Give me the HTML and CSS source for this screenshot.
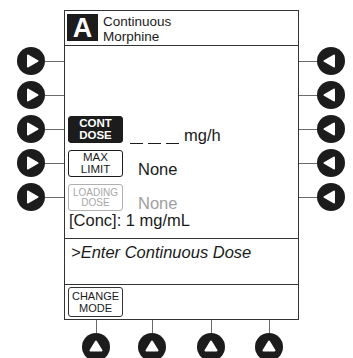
FILE: index.html
```html
<!DOCTYPE html>
<html lang="en">
  <head>
    <title>Continuous Morphine</title>
    <meta charset="utf-8">
    <link rel="stylesheet" href="styles.css">
  </head>
  <body>
    <div class="device">
      <div class="keys keys-left">
        <div class="key"><svg class="knob" viewBox="0 0 28 28"><circle cx="14" cy="14" r="14"/><polygon points="11,8.5 20.5,14 11,19.5"/></svg><span class="wire"></span></div>
        <div class="key"><svg class="knob" viewBox="0 0 28 28"><circle cx="14" cy="14" r="14"/><polygon points="11,8.5 20.5,14 11,19.5"/></svg><span class="wire"></span></div>
        <div class="key"><svg class="knob" viewBox="0 0 28 28"><circle cx="14" cy="14" r="14"/><polygon points="11,8.5 20.5,14 11,19.5"/></svg><span class="wire"></span></div>
        <div class="key"><svg class="knob" viewBox="0 0 28 28"><circle cx="14" cy="14" r="14"/><polygon points="11,8.5 20.5,14 11,19.5"/></svg><span class="wire"></span></div>
        <div class="key"><svg class="knob" viewBox="0 0 28 28"><circle cx="14" cy="14" r="14"/><polygon points="11,8.5 20.5,14 11,19.5"/></svg><span class="wire"></span></div>
      </div>

      <div class="screen">
        <div class="header">
          <span class="channel">A</span>
          <div class="title">Continuous<br>Morphine</div>
        </div>
        <div class="fields">
          <div class="field">
            <span class="soft soft-active">CONT<br>DOSE</span>
            <span class="blanks"><i></i><i></i><i></i></span>
            <span class="unit">mg/h</span>
          </div>
          <div class="field">
            <span class="soft">MAX<br>LIMIT</span>
            <span class="value">None</span>
          </div>
          <div class="field">
            <span class="soft soft-off">LOADING<br>DOSE</span>
            <span class="value muted">None</span>
          </div>
          <div class="conc">[Conc]: 1 mg/mL</div>
        </div>
        <div class="prompt">&gt;Enter Continuous Dose</div>
        <div class="footer">
          <span class="soft soft-mode">CHANGE<br>MODE</span>
        </div>
      </div>

      <div class="keys keys-right">
        <div class="key"><span class="wire"></span><svg class="knob" viewBox="0 0 28 28"><circle cx="14" cy="14" r="14"/><polygon points="17,8.5 7.5,14 17,19.5"/></svg></div>
        <div class="key"><span class="wire"></span><svg class="knob" viewBox="0 0 28 28"><circle cx="14" cy="14" r="14"/><polygon points="17,8.5 7.5,14 17,19.5"/></svg></div>
        <div class="key"><span class="wire"></span><svg class="knob" viewBox="0 0 28 28"><circle cx="14" cy="14" r="14"/><polygon points="17,8.5 7.5,14 17,19.5"/></svg></div>
        <div class="key"><span class="wire"></span><svg class="knob" viewBox="0 0 28 28"><circle cx="14" cy="14" r="14"/><polygon points="17,8.5 7.5,14 17,19.5"/></svg></div>
        <div class="key"><span class="wire"></span><svg class="knob" viewBox="0 0 28 28"><circle cx="14" cy="14" r="14"/><polygon points="17,8.5 7.5,14 17,19.5"/></svg></div>
      </div>
    </div>

    <div class="keys-bottom">
      <div class="key-v"><span class="wire-v"></span><svg class="knob" viewBox="0 0 28 28"><circle cx="14" cy="14" r="14"/><polygon points="8.5,17.5 14,8.5 19.5,17.5"/></svg></div>
      <div class="key-v"><span class="wire-v"></span><svg class="knob" viewBox="0 0 28 28"><circle cx="14" cy="14" r="14"/><polygon points="8.5,17.5 14,8.5 19.5,17.5"/></svg></div>
      <div class="key-v"><span class="wire-v"></span><svg class="knob" viewBox="0 0 28 28"><circle cx="14" cy="14" r="14"/><polygon points="8.5,17.5 14,8.5 19.5,17.5"/></svg></div>
      <div class="key-v"><span class="wire-v"></span><svg class="knob" viewBox="0 0 28 28"><circle cx="14" cy="14" r="14"/><polygon points="8.5,17.5 14,8.5 19.5,17.5"/></svg></div>
    </div>
  </body>
</html>
```

FILE: styles.css
```css
html, body {
  margin: 0;
  background: #fff;
  overflow: hidden;
}
body {
  font-family: "Liberation Sans", Arial, sans-serif;
  color: #1a1a1a;
}

.device {
  display: flex;
  padding-top: 10px;
}

/* side keys */
.keys {
  display: flex;
  flex-direction: column;
  gap: 6px;
  padding-top: 37px;
}
.keys-left { width: 64px; }
.keys-right { width: 54px; }

.key {
  display: flex;
  align-items: center;
  height: 28px;
}
.keys-left .knob { margin-left: 17px; }
.keys-right .knob { margin-right: 8px; }

.knob {
  width: 28px;
  height: 28px;
  flex: none;
}
.knob circle { fill: #1c1c1c; }
.knob polygon {
  fill: #fff;
  stroke: #fff;
  stroke-width: 2;
  stroke-linejoin: round;
}

.wire {
  flex: 1;
  height: 1px;
  background: #6a6a6a;
}

/* display */
.screen {
  box-sizing: border-box;
  width: 235px;
  height: 310px;
  border: 1px solid #333;
  display: flex;
  flex-direction: column;
}

.header {
  box-sizing: border-box;
  height: 35px;
  border-bottom: 1px solid #333;
  display: flex;
  align-items: flex-start;
  padding: 3px 0 0 2px;
}
.channel {
  width: 31px;
  height: 27px;
  background: #1c1c1c;
  color: #fff;
  font-weight: bold;
  font-size: 27px;
  line-height: 28px;
  text-align: center;
}
.title {
  margin-left: 5px;
  font-size: 13.5px;
  line-height: 15px;
}

.fields {
  box-sizing: border-box;
  height: 193px;
  border-bottom: 1px solid #333;
  padding: 70px 0 0 3px;
}
.field {
  display: flex;
  align-items: flex-end;
  height: 27px;
}
.field + .field { margin-top: 7px; }

.soft {
  box-sizing: border-box;
  width: 55px;
  height: 27px;
  border: 1px solid #1c1c1c;
  border-radius: 3px;
  display: flex;
  align-items: center;
  justify-content: center;
  text-align: center;
  font-size: 11.5px;
  line-height: 11.5px;
  flex: none;
}
.soft-active {
  background: #1c1c1c;
  color: #fff;
  font-weight: bold;
}
.soft-off {
  border-color: #b0b0b0;
  color: #a8a8a8;
  font-size: 10px;
  line-height: 10px;
}

.value, .unit {
  font-size: 16.5px;
  line-height: 19px;
  margin-bottom: -2px;
}
.value { margin-left: 15px; }
.muted { color: #a0a0a0; }

.blanks {
  display: flex;
  gap: 5px;
  margin: 0 5px -1px 7px;
}
.blanks i {
  width: 13px;
  height: 1.5px;
  background: #1c1c1c;
}

.conc {
  font-size: 16.5px;
  line-height: 16px;
  margin-top: 1px;
  padding-left: 1px;
}

.prompt {
  box-sizing: border-box;
  height: 46px;
  border-bottom: 1px solid #333;
  padding: 4px 0 0 6px;
  font-size: 16.5px;
  line-height: 19px;
  font-style: italic;
}

.footer {
  flex: 1;
  padding: 2px 0 0 3px;
}
.soft-mode {
  height: 30px;
  font-size: 11px;
  line-height: 12px;
  border-color: #333;
}

/* bottom keys */
.keys-bottom {
  display: grid;
  grid-template-columns: 56px 59px 58px 28px;
  padding-left: 82px;
}
.key-v {
  display: flex;
  flex-direction: column;
  align-items: center;
  width: 28px;
}
.wire-v {
  width: 1px;
  height: 13px;
  background: #6a6a6a;
}
```
